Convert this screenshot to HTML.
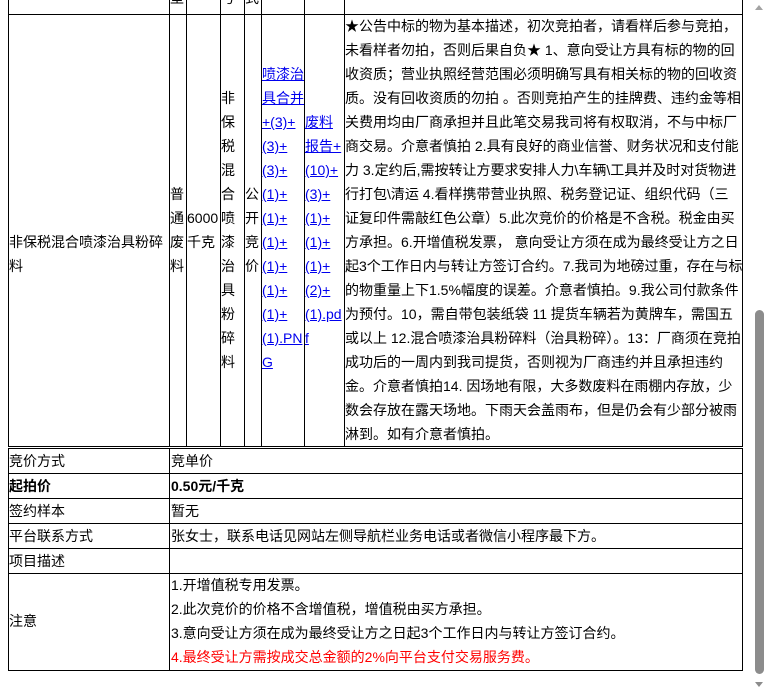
<!DOCTYPE html>
<html><head><meta charset="utf-8"><style>
*{margin:0;padding:0;box-sizing:border-box}
body{width:767px;height:693px;overflow:hidden;background:#fff;position:relative;font-family:"Liberation Sans","Noto Sans CJK SC",sans-serif;font-size:14px;color:#000}
.b{position:absolute;background:#000}
.t{position:absolute;line-height:24px;white-space:nowrap}
a{color:#00e;text-decoration:underline}
</style></head><body>
<div class="b" style="left:8px;top:0;width:1px;height:447px"></div>
<div class="b" style="left:169px;top:0;width:1px;height:447px"></div>
<div class="b" style="left:186px;top:0;width:1px;height:447px"></div>
<div class="b" style="left:220px;top:0;width:1px;height:447px"></div>
<div class="b" style="left:244px;top:0;width:1px;height:447px"></div>
<div class="b" style="left:261px;top:0;width:1px;height:447px"></div>
<div class="b" style="left:304px;top:0;width:1px;height:447px"></div>
<div class="b" style="left:344px;top:0;width:1px;height:447px"></div>
<div class="b" style="left:742px;top:0;width:1px;height:447px"></div>
<div class="b" style="left:8px;top:14px;width:735px;height:1px"></div>
<div class="b" style="left:8px;top:446px;width:735px;height:1px"></div>
<div class="t" style="left:170px;top:-14px">型</div>
<div class="t" style="left:221px;top:-14px">号</div>
<div class="t" style="left:245px;top:-14px">式</div>
<div class="t" style="left:9px;top:230px">非保税混合喷漆治具粉碎<br>料</div>
<div class="t" style="left:170px;top:182px">普<br>通<br>废<br>料</div>
<div class="t" style="left:187px;top:206px">6000<br>千克</div>
<div class="t" style="left:221px;top:86px">非<br>保<br>税<br>混<br>合<br>喷<br>漆<br>治<br>具<br>粉<br>碎<br>料</div>
<div class="t" style="left:245px;top:182px">公<br>开<br>竞<br>价</div>
<div class="t" style="left:262px;top:62px"><a>喷漆治<br>具合并<br>+(3)+<br>(3)+<br>(3)+<br>(1)+<br>(1)+<br>(1)+<br>(1)+<br>(1)+<br>(1)+<br>(1).PN<br>G</a></div>
<div class="t" style="left:305px;top:110px"><a>废料<br>报告+<br>(10)+<br>(3)+<br>(1)+<br>(1)+<br>(1)+<br>(2)+<br>(1).pd<br>f</a></div>
<div class="t" style="left:345px;top:14px">★公告中标的物为基本描述，初次竞拍者，请看样后参与竞拍，<br>未看样者勿拍，否则后果自负★ 1、意向受让方具有标的物的回<br>收资质；营业执照经营范围必须明确写具有相关标的物的回收资<br>质。没有回收资质的勿拍 。否则竞拍产生的挂牌费、违约金等相<br>关费用均由厂商承担并且此笔交易我司将有权取消，不与中标厂<br>商交易。介意者慎拍 2.具有良好的商业信誉、财务状况和支付能<br>力 3.定约后,需按转让方要求安排人力\车辆\工具并及时对货物进<br>行打包\清运 4.看样携带营业执照、税务登记证、组织代码（三<br>证复印件需敲红色公章）5.此次竞价的价格是不含税。税金由买<br>方承担。6.开增值税发票， 意向受让方须在成为最终受让方之日<br>起3个工作日内与转让方签订合约。7.我司为地磅过重，存在与标<br>的物重量上下1.5%幅度的误差。介意者慎拍。9.我公司付款条件<br>为预付。10，需自带包装纸袋 11 提货车辆若为黄牌车，需国五<br>或以上 12.混合喷漆治具粉碎料（治具粉碎）。13：厂商须在竞拍<br>成功后的一周内到我司提货，否则视为厂商违约并且承担违约<br>金。介意者慎拍14. 因场地有限，大多数废料在雨棚内存放，少<br>数会存放在露天场地。下雨天会盖雨布，但是仍会有少部分被雨<br>淋到。如有介意者慎拍。</div>
<div class="b" style="left:8px;top:448px;width:1px;height:223px"></div>
<div class="b" style="left:169px;top:448px;width:1px;height:223px"></div>
<div class="b" style="left:742px;top:448px;width:1px;height:223px"></div>
<div class="b" style="left:8px;top:448px;width:735px;height:1px"></div>
<div class="b" style="left:8px;top:473px;width:735px;height:1px"></div>
<div class="b" style="left:8px;top:498px;width:735px;height:1px"></div>
<div class="b" style="left:8px;top:523px;width:735px;height:1px"></div>
<div class="b" style="left:8px;top:548px;width:735px;height:1px"></div>
<div class="b" style="left:8px;top:573px;width:735px;height:1px"></div>
<div class="b" style="left:8px;top:670px;width:735px;height:1px"></div>
<div class="t" style="left:9px;top:449px">竞价方式</div>
<div class="t" style="left:171px;top:449px">竞单价</div>
<div class="t" style="left:9px;top:474px;font-weight:bold">起拍价</div>
<div class="t" style="left:171px;top:474px;font-weight:bold">0.50元/千克</div>
<div class="t" style="left:9px;top:499px">签约样本</div>
<div class="t" style="left:171px;top:499px">暂无</div>
<div class="t" style="left:9px;top:524px">平台联系方式</div>
<div class="t" style="left:171px;top:524px">张女士，联系电话见网站左侧导航栏业务电话或者微信小程序最下方。</div>
<div class="t" style="left:9px;top:549px">项目描述</div>
<div class="t" style="left:9px;top:609px">注意</div>
<div class="t" style="left:171px;top:573px">1.开增值税专用发票。</div>
<div class="t" style="left:171px;top:597px">2.此次竞价的价格不含增值税，增值税由买方承担。</div>
<div class="t" style="left:171px;top:621px">3.意向受让方须在成为最终受让方之日起3个工作日内与转让方签订合约。</div>
<div class="t" style="left:171px;top:645px;color:#f00">4.最终受让方需按成交总金额的2%向平台支付交易服务费。</div>
<div style="position:absolute;left:755px;top:310px;width:9px;height:364px;background:#8c8c8c;border-radius:5px"></div>
<div style="position:absolute;left:755px;top:5px;width:0;height:0;border-left:4.5px solid transparent;border-right:4.5px solid transparent;border-bottom:5px solid #a3a3a3"></div>
<div style="position:absolute;left:755px;top:682px;width:0;height:0;border-left:4.5px solid transparent;border-right:4.5px solid transparent;border-top:5px solid #8c8c8c"></div>
</body></html>
